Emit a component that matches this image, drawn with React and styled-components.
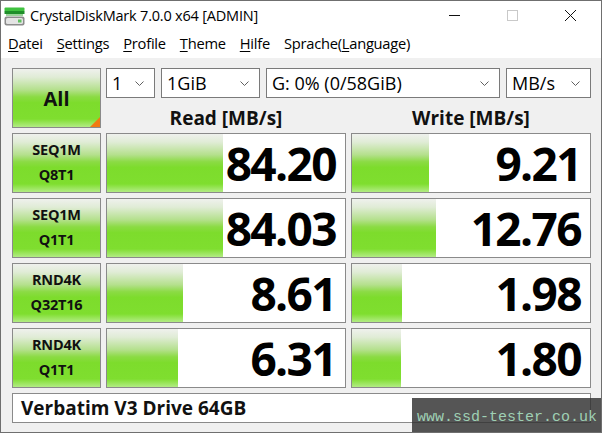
import React from 'react';
import styled, { createGlobalStyle } from 'styled-components';

const GlobalStyle = createGlobalStyle`
  html, body {
    margin: 0;
    padding: 0;
    background: #ffffff;
  }
  body {
    font-family: "Open Sans", "Noto Sans", sans-serif;
    color: #000;
  }
`;

const GREEN = `linear-gradient(to bottom,
  #eff1ed 0%, #e0ecd6 14%, #b4e08c 36%, #8bdb44 48%,
  #7ddc2c 58%, #7fde2f 86%, #b2ec84 100%)`;

const results = [
  { l1: 'SEQ1M', l2: 'Q8T1', read: '84.20', readBar: 116, write: '9.21', writeBar: 77 },
  { l1: 'SEQ1M', l2: 'Q1T1', read: '84.03', readBar: 116, write: '12.76', writeBar: 84 },
  { l1: 'RND4K', l2: 'Q32T16', read: '8.61', readBar: 76, write: '1.98', writeBar: 50 },
  { l1: 'RND4K', l2: 'Q1T1', read: '6.31', readBar: 71, write: '1.80', writeBar: 49 }
];

const menu = [
  { key: 'D', rest: 'atei' },
  { key: 'S', rest: 'ettings' },
  { key: 'P', rest: 'rofile' },
  { key: 'T', rest: 'heme' },
  { key: 'H', rest: 'ilfe' },
  { pre: 'Sprache(', key: 'L', rest: 'anguage)' }
];

const AppIcon = () => (
  <svg width="21" height="19" viewBox="0 0 21 19">
    <rect x="0.5" y="0.5" width="20" height="4" rx="1" fill="#3fc13f" />
    <rect x="0.5" y="4" width="20" height="3" fill="#1f8f2a" />
    <rect x="2" y="7" width="17" height="2" fill="#9ad39a" />
    <rect x="0.5" y="9.5" width="20" height="9" rx="2" fill="#8c8c8c" />
    <rect x="2" y="11" width="17" height="6" rx="1.5" fill="#e4e4e4" />
    <rect x="14" y="12.5" width="3.5" height="3" fill="#5ec15e" />
  </svg>
);

const Chevron = () => (
  <svg width="9" height="5" viewBox="0 0 9 5">
    <path d="M0.5 0.5 L4.5 4.5 L8.5 0.5" fill="none" stroke="#606060" strokeWidth="1" />
  </svg>
);

const Dropdown = ({ width, children }) => (
  <Select $width={width}>
    <span>{children}</span>
    <Chevron />
  </Select>
);

const App = () => (
  <>
    <GlobalStyle />
    <Window>
      <TitleBar>
        <IconSlot>
          <AppIcon />
        </IconSlot>
        <Title>CrystalDiskMark 7.0.0 x64 [ADMIN]</Title>
        <WinButtons>
          <WinButton>
            <svg width="11" height="11" viewBox="0 0 11 11">
              <path d="M0 5.5 H11" stroke="#111" strokeWidth="1" />
            </svg>
          </WinButton>
          <WinButton>
            <svg width="11" height="11" viewBox="0 0 11 11">
              <rect x="0.5" y="0.5" width="10" height="10" fill="none" stroke="#c9c9c9" />
            </svg>
          </WinButton>
          <WinButton>
            <svg width="11" height="11" viewBox="0 0 11 11">
              <path d="M0 0 L11 11 M11 0 L0 11" stroke="#111" strokeWidth="1" />
            </svg>
          </WinButton>
        </WinButtons>
      </TitleBar>

      <MenuBar>
        {menu.map(m => (
          <MenuItem key={m.key}>
            {m.pre}
            <u>{m.key}</u>
            {m.rest}
          </MenuItem>
        ))}
      </MenuBar>

      <Board>
        <AllButton>All</AllButton>
        <Controls>
          <Dropdown width={49}>1</Dropdown>
          <Dropdown width={99}>1GiB</Dropdown>
          <Dropdown width={234}>G: 0% (0/58GiB)</Dropdown>
          <Dropdown width={85}>MB/s</Dropdown>
        </Controls>
        <Header>Read [MB/s]</Header>
        <Header>Write [MB/s]</Header>

        {results.map(r => (
          <React.Fragment key={r.l1 + r.l2}>
            <TestButton>
              <span>{r.l1}</span>
              <span>{r.l2}</span>
            </TestButton>
            <Score $fill={r.readBar}>{r.read}</Score>
            <Score $fill={r.writeBar}>{r.write}</Score>
          </React.Fragment>
        ))}

        <DriveName>Verbatim V3 Drive 64GB</DriveName>
      </Board>

      <Watermark>www.ssd-tester.co.uk</Watermark>
    </Window>
  </>
);

export default App;

const Window = styled.div`
  position: relative;
  width: 602px;
  height: 433px;
  box-sizing: border-box;
  border: 1px solid #6f6f6f;
  display: flex;
  flex-direction: column;
  background: #f0f0f0;
  overflow: hidden;
`;

const TitleBar = styled.div`
  height: 29px;
  display: flex;
  align-items: center;
  background: #ffffff;
`;

const IconSlot = styled.div`
  width: 21px;
  height: 19px;
  margin-left: 3px;
  margin-top: 1px;
`;

const Title = styled.div`
  margin-left: 5px;
  font-size: 14.5px;
  color: #000;
  letter-spacing: -0.2px;
`;

const WinButtons = styled.div`
  margin-left: auto;
  display: flex;
  height: 100%;
  margin-right: 2px;
`;

const WinButton = styled.div`
  width: 58px;
  height: 100%;
  display: flex;
  align-items: center;
  justify-content: center;
`;

const MenuBar = styled.div`
  height: 28px;
  display: flex;
  align-items: center;
  background: #ffffff;
  border-bottom: 1px solid #f0f0f0;
`;

const MenuItem = styled.div`
  padding: 0 7px;
  font-size: 14.7px;
  letter-spacing: -0.25px;
  color: #000;
  margin-top: -2px;

  u {
    text-decoration: underline;
    text-underline-offset: 2px;
  }
`;

const Board = styled.div`
  display: grid;
  grid-template-columns: 89px 240px 240px;
  grid-template-rows: 30px 25px repeat(4, 60px) 30px;
  gap: 5px;
  padding: 9px 0 0 11px;
`;

const greenButton = `
  box-sizing: border-box;
  border: 1px solid #8a8a8a;
  background: ${GREEN};
  font-weight: 700;
  color: #111;
  display: flex;
  align-items: center;
  justify-content: center;
`;

const AllButton = styled.div`
  ${greenButton}
  grid-row: 1 / span 2;
  position: relative;
  font-size: 20px;

  &::after {
    content: '';
    position: absolute;
    right: 0;
    bottom: 0;
    border-style: solid;
    border-width: 0 0 10px 10px;
    border-color: transparent transparent #f07a12 transparent;
  }
`;

const TestButton = styled.div`
  ${greenButton}
  flex-direction: column;
  font-size: 14.5px;
  line-height: 25px;
  letter-spacing: -0.2px;
  padding-bottom: 2px;
`;

const Controls = styled.div`
  grid-column: 2 / span 2;
  display: flex;
  gap: 6px;
`;

const Select = styled.div`
  box-sizing: border-box;
  width: ${p => p.$width}px;
  height: 30px;
  border: 1px solid #7a7a7a;
  background: #ffffff;
  display: flex;
  align-items: center;
  justify-content: space-between;
  padding: 0 10px 0 5px;
  font-size: 18px;
  color: #000;
`;

const Header = styled.div`
  display: flex;
  align-items: flex-end;
  justify-content: center;
  font-size: 19px;
  font-weight: 700;
  line-height: 19px;
  color: #111;
`;

const Score = styled.div`
  box-sizing: border-box;
  border: 1px solid #8a8a8a;
  background: ${GREEN} left top / ${p => p.$fill}px 100% no-repeat, #ffffff;
  display: flex;
  align-items: center;
  justify-content: flex-end;
  padding-right: 9px;
  font-size: 46px;
  font-weight: 700;
  letter-spacing: -1.6px;
  color: #000;
`;

const DriveName = styled.div`
  grid-column: 1 / -1;
  box-sizing: border-box;
  border: 1px solid #8a8a8a;
  background: #ffffff;
  display: flex;
  align-items: center;
  padding-left: 8px;
  font-size: 19px;
  font-weight: 700;
  color: #111;
`;

const Watermark = styled.div`
  position: absolute;
  right: -1px;
  bottom: -1px;
  width: 190px;
  height: 35px;
  box-sizing: border-box;
  background: rgba(48, 48, 48, 0.82);
  display: flex;
  align-items: center;
  justify-content: flex-end;
  padding: 4px 5px 0 0;
  font-family: "Liberation Mono", "DejaVu Sans Mono", monospace;
  font-size: 15px;
  color: #9fd0b4;
`;
